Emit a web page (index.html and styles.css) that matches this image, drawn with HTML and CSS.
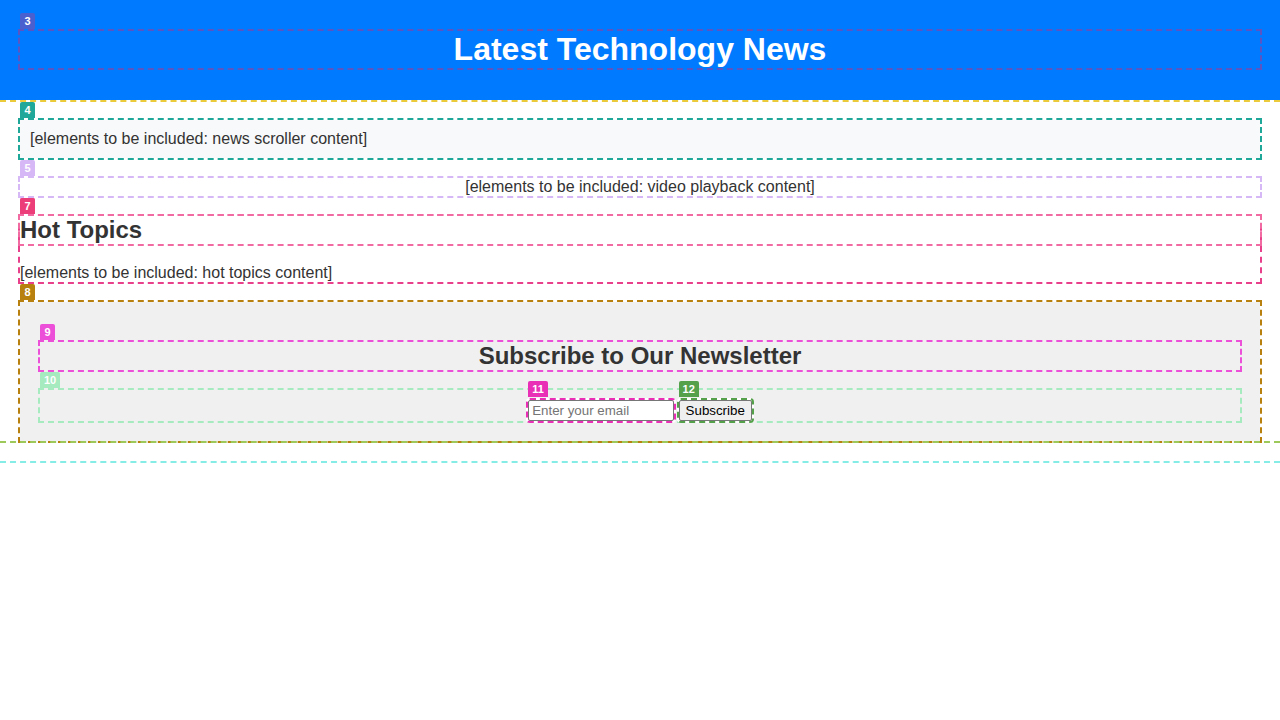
FILE: index.html
```html
<!DOCTYPE html>
<html lang="en">
<head>
<meta charset="utf-8">
<title>Latest Technology News</title>
<link rel="stylesheet" href="styles.css">
</head>
<body>
<div class="page">
  <header class="site-header">
    <h1 class="box title c3"><span class="badge">3</span>Latest Technology News</h1>
  </header>
  <main class="content">
    <section class="box news-scroller c4"><span class="badge">4</span>[elements to be included: news scroller content]</section>
    <section class="box video c5"><span class="badge">5</span>[elements to be included: video playback content]</section>
    <section class="box hot-topics c7">
      <h2 class="box section-title c6"><span class="badge">6</span>Hot Topics</h2>
      <p class="hot-text">[elements to be included: hot topics content]</p>
      <span class="badge">7</span>
    </section>
    <section class="box newsletter c8"><span class="badge">8</span>
      <h2 class="box newsletter-title c9"><span class="badge">9</span>Subscribe to Our Newsletter</h2>
      <form class="box subscribe-form c10"><span class="badge">10</span>
        <span class="field c11"><span class="badge">11</span><input class="email" type="email" placeholder="Enter your email"></span>
        <span class="field c12"><span class="badge">12</span><button class="submit" type="button">Subscribe</button></span>
      </form>
    </section>
  </main>
  <div class="page-end"></div>
</div>
</body>
</html>
```
FILE: styles.css
```css
body {
  margin: 0;
  font-family: "Liberation Sans", Arial, sans-serif;
  color: #333;
  background: #fff;
}

.page-end {
  height: 20px;
  border-bottom: 2px dashed #86ece6;
}

.site-header {
  position: relative;
  background: #007bff;
  padding: 10px 20px;
}

.site-header::after {
  content: "";
  position: absolute;
  left: 0;
  right: 0;
  bottom: -2px;
  border-top: 2px dashed #eccb3a;
}

.box {
  position: relative;
  outline: 2px dashed var(--c);
}

.badge {
  position: absolute;
  left: 0;
  top: -18px;
  height: 16px;
  min-width: 15px;
  padding: 0 4px;
  box-sizing: border-box;
  background: var(--c);
  color: #fff;
  font: bold 11px/16px "Liberation Sans", Arial, sans-serif;
  text-align: center;
  border-radius: 2px 2px 0 0;
  z-index: 1;
}

.c3 { --c: #5b55c4; }
.c3 > .badge { background: #4a60cf; }
.c4 { --c: #1fa89a; }
.c5 { --c: #d6b8f7; }
.c6 { --c: #f26aa2; }
.c7 { --c: #e8408a; }
.c7 > .badge { background: #ec3f7a; }
.c8 { --c: #b8800e; }
.c9 { --c: #ec4fd8; }
.c10 { --c: #a6eabf; }
.c11 { --c: #e92fb6; }
.c12 { --c: #55a04b; }

.title {
  margin: 21.44px 0;
  font-size: 32px;
  font-weight: bold;
  color: #fff;
  text-align: center;
}

.content {
  position: relative;
  margin-top: 20px;
  padding: 0 20px;
}

.content::after {
  content: "";
  position: absolute;
  left: 0;
  right: 0;
  bottom: -2px;
  border-top: 2px dashed #9cc95a;
}

.news-scroller {
  background: #f8f9fa;
  padding: 10px;
}

.video {
  margin-top: 20px;
  text-align: center;
}

.hot-topics {
  margin-top: 20px;
}

.section-title {
  margin: 0 0 20px;
  font-size: 24px;
}

.hot-text {
  margin: 0;
}

.newsletter {
  margin-top: 20px;
  background: #f0f0f0;
  padding: 20px;
  text-align: center;
}

.newsletter-title {
  margin: 20px 0;
  font-size: 24px;
}

.subscribe-form {
  padding-top: 10px;
}

.field {
  position: relative;
  display: inline-block;
  font-size: 0;
  line-height: 0;
}

.field .badge {
  top: -19px;
}

.email,
.submit {
  margin: 0;
  font: 13.333px "Liberation Sans", Arial, sans-serif;
  color: #000;
  border: 1px solid #767676;
  border-radius: 2px;
  outline: 2px dashed var(--c);
  box-shadow: 0 0 0 2px #fff;
}

.email {
  width: 138px;
  padding: 2px 3px;
  background: #fff;
}

.email::placeholder {
  color: #757575;
}

.submit {
  padding: 2px 6px;
  background: #efefef;
}
```
